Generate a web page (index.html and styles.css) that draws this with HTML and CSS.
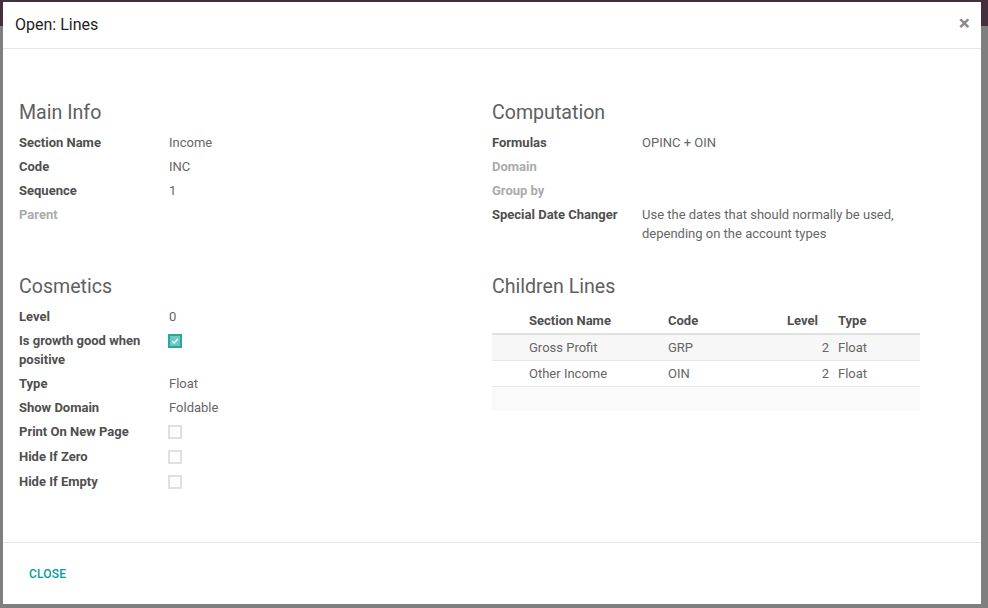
FILE: index.html
```html
<!DOCTYPE html>
<html>
<head>
<meta charset="utf-8">
<link rel="stylesheet" href="styles.css">
</head>
<body>
<div class="modal">
  <div class="modal-header">
    <h4 class="modal-title">Open: Lines</h4>
    <span class="close">×</span>
  </div>
  <div class="modal-body">
    <div class="groups">
      <div class="col">
        <div class="group-title">Main Info</div>
        <div class="row"><div class="label">Section Name</div><div class="value">Income</div></div>
        <div class="row"><div class="label">Code</div><div class="value">INC</div></div>
        <div class="row"><div class="label">Sequence</div><div class="value">1</div></div>
        <div class="row"><div class="label muted">Parent</div><div class="value"></div></div>
      </div>
      <div class="col">
        <div class="group-title">Computation</div>
        <div class="row"><div class="label">Formulas</div><div class="value">OPINC + OIN</div></div>
        <div class="row"><div class="label muted">Domain</div><div class="value"></div></div>
        <div class="row"><div class="label muted">Group by</div><div class="value"></div></div>
        <div class="row"><div class="label">Special Date Changer</div><div class="value">Use the dates that should normally be used, depending on the account types</div></div>
      </div>
    </div>
    <div class="groups second">
      <div class="col">
        <div class="group-title">Cosmetics</div>
        <div class="row"><div class="label">Level</div><div class="value">0</div></div>
        <div class="row"><div class="label">Is growth good when positive</div><div class="value"><span class="cb checked"><svg viewBox="0 0 10 10" width="8" height="8"><path d="M1.5 5.2 L4 7.5 L8.5 2.5" fill="none" stroke="#fff" stroke-width="1.6"/></svg></span></div></div>
        <div class="row"><div class="label">Type</div><div class="value">Float</div></div>
        <div class="row"><div class="label">Show Domain</div><div class="value">Foldable</div></div>
        <div class="row row-cb"><div class="label">Print On New Page</div><div class="value"><span class="cb"></span></div></div>
        <div class="row row-cb"><div class="label">Hide If Zero</div><div class="value"><span class="cb"></span></div></div>
        <div class="row row-cb"><div class="label">Hide If Empty</div><div class="value"><span class="cb"></span></div></div>
      </div>
      <div class="col">
        <div class="group-title">Children Lines</div>
        <table class="list">
          <colgroup>
            <col class="c-handle"><col class="c-name"><col class="c-code"><col class="c-level"><col class="c-type">
          </colgroup>
          <thead>
            <tr><th></th><th>Section Name</th><th>Code</th><th class="num">Level</th><th class="type">Type</th></tr>
          </thead>
          <tbody>
            <tr class="odd"><td></td><td>Gross Profit</td><td>GRP</td><td class="num">2</td><td class="type">Float</td></tr>
            <tr><td></td><td>Other Income</td><td>OIN</td><td class="num">2</td><td class="type">Float</td></tr>
            <tr class="filler"><td colspan="5"></td></tr>
          </tbody>
        </table>
      </div>
    </div>
  </div>
  <div class="modal-footer">
    <span class="btn-close">CLOSE</span>
  </div>
</div>
</body>
</html>
```
FILE: styles.css
```css
html, body {
  margin: 0;
  padding: 0;
}
body {
  width: 988px;
  height: 608px;
  overflow: hidden;
  background: linear-gradient(#432f3e 0, #432f3e 26px, #7f7f7f 26px);
  font-family: Roboto, "Liberation Sans", sans-serif;
  padding-top: 2px;
  box-sizing: border-box;
}
.modal {
  margin-left: 3px;
  width: 978px;
  height: 602px;
  background: #fff;
  display: flex;
  flex-direction: column;
}
.modal-header {
  height: 46px;
  border-bottom: 1px solid #e5e5e5;
  display: flex;
  align-items: center;
  justify-content: space-between;
  padding: 0 11px 0 12px;
  flex: none;
}
.modal-title {
  margin: 0;
  font-size: 16px;
  font-weight: 400;
  color: #222;
  padding-bottom: 2px;
}
.close {
  font-size: 21px;
  font-weight: 700;
  color: #8a8a8a;
  line-height: 1;
  padding-bottom: 4px;
}
.modal-body {
  flex: 1;
  padding: 51px 16px 0 16px;
}
.groups {
  display: flex;
}
.groups.second {
  margin-top: 29px;
}
.col {
  width: 473px;
  padding-right: 45px;
  box-sizing: border-box;
}
.group-title {
  font-size: 19.6px;
  line-height: 26px;
  color: #606060;
  margin-bottom: 4px;
}
.row {
  display: flex;
  padding: 3px 0 2px;
  line-height: 19px;
  font-size: 13px;
}
.row-cb {
  padding-bottom: 3px;
}
.label {
  width: 150px;
  flex: none;
  padding-right: 15px;
  box-sizing: border-box;
  font-weight: 700;
  color: #4f4f4f;
}
.label.muted {
  color: #ababab;
}
.value {
  flex: 1;
  color: #666;
}
.cb {
  display: flex;
  align-items: center;
  justify-content: center;
  width: 14px;
  height: 14px;
  box-sizing: border-box;
  border: 2px solid #e0e0e0;
  background: #fdfdfd;
  margin-top: 3px;
  margin-left: -1px;
}
.cb.checked {
  border-color: #27a7a3;
  background: #6cc8c4;
  margin-top: 3px;
}
.list {
  margin-top: 8px;
  width: 428px;
  border-collapse: collapse;
  table-layout: fixed;
  font-size: 13px;
}
.c-handle { width: 29px; }
.c-name { width: 139px; }
.c-code { width: 110px; }
.c-level { width: 64px; }
.c-type { width: 86px; }
.list th {
  text-align: left;
  font-weight: 700;
  color: #4f4f4f;
  height: 26px;
  padding: 0 8px;
  border-bottom: 2px solid #e2e2e2;
  box-sizing: border-box;
}
.list td {
  height: 25px;
  padding: 0 8px;
  color: #666;
  border-bottom: 1px solid #e6e6e6;
}
.list th.num {
  text-align: right;
  padding-right: 16px;
}
.list td.num {
  text-align: right;
  padding-right: 5px;
}
.list .type {
  padding-left: 4px;
}
.list tr.odd td {
  background: #f7f7f7;
}
.list tr.filler td {
  height: 24px;
  background: #fafafa;
  border-bottom: none;
}
.modal-footer {
  flex: none;
  height: 61px;
  border-top: 1px solid #e5e5e5;
  display: flex;
  align-items: center;
  padding: 0 16px;
}
.btn-close {
  padding: 0 10px;
  color: #00a09d;
  font-size: 12px;
  font-weight: 500;
  letter-spacing: 0.2px;
}
```
